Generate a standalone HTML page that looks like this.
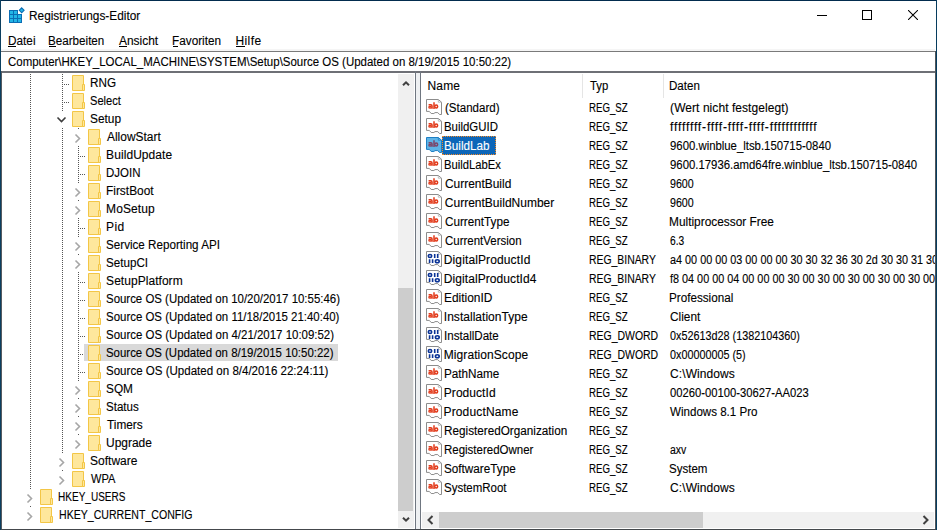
<!DOCTYPE html>
<html><head><meta charset="utf-8"><style>
html,body{margin:0;padding:0;width:937px;height:530px;overflow:hidden;background:#fff}
body{position:relative;font-family:"Liberation Sans", sans-serif;font-size:12px}
.t{position:absolute;white-space:pre;line-height:14px;font-size:12px;transform-origin:0 0;display:inline-block;-webkit-text-stroke:0.12px currentColor;}
.r{position:absolute}
</style></head><body>
<svg style="position:absolute;left:9px;top:7px" width="16" height="16" viewBox="0 0 16 16">
<path d="M0 3 H9 V7 H13 V16 H0 Z" fill="#0b6db4"/>
<g fill="#22b5e6">
<rect x="1" y="4" width="3" height="3"/><rect x="5" y="4" width="3" height="3"/>
<rect x="1" y="8" width="3" height="3"/><rect x="5" y="8" width="3" height="3"/><rect x="9" y="8" width="3" height="3"/>
<rect x="1" y="12" width="3" height="3"/><rect x="5" y="12" width="3" height="3"/><rect x="9" y="12" width="3" height="3"/>
</g>
<path d="M12.7 0.9 L15.1 3.3 L12.7 5.7 L10.3 3.3 Z" fill="#22b5e6" stroke="#0b6db4" stroke-width="1.1"/>
</svg><span class="t" style="left:29.41px;top:8.84px;color:#000;transform:scaleX(0.9866);">Registrierungs-Editor</span><div class="r" style="left:817px;top:15px;width:10px;height:1px;background:#000;"></div><div class="r" style="left:862px;top:10px;width:10px;height:10px;background:transparent;box-sizing:border-box;border:1px solid #000"></div><svg style="position:absolute;left:908px;top:10px" width="10" height="10" viewBox="0 0 10 10"><path d="M0 0 L10 10 M10 0 L0 10" stroke="#000" stroke-width="1.05"/></svg><span class="t" style="left:8.02px;top:33.54px;color:#000;transform:scaleX(0.9815);">Datei</span><span class="t" style="left:48.33px;top:33.54px;color:#000;transform:scaleX(0.9702);">Bearbeiten</span><span class="t" style="left:119.40px;top:33.54px;color:#000;transform:scaleX(0.9950);">Ansicht</span><span class="t" style="left:172.22px;top:33.54px;color:#000;transform:scaleX(0.9816);">Favoriten</span><span class="t" style="left:235.40px;top:33.54px;color:#000;letter-spacing:0.425px;">Hilfe</span><div class="r" style="left:8px;top:46px;width:8px;height:1px;background:#000;"></div><div class="r" style="left:49px;top:46px;width:7px;height:1px;background:#000;"></div><div class="r" style="left:119px;top:46px;width:8px;height:1px;background:#000;"></div><div class="r" style="left:173px;top:46px;width:5px;height:1px;background:#000;"></div><div class="r" style="left:236px;top:46px;width:9px;height:1px;background:#000;"></div><div class="r" style="left:1px;top:49px;width:934px;height:2px;background:#f5f5f5;"></div><div class="r" style="left:1px;top:51px;width:934px;height:1px;background:#7a7a7a;"></div><div class="r" style="left:1px;top:71px;width:934px;height:2px;background:#6e7076;"></div><span class="t" style="left:7.60px;top:54.54px;color:#000;transform:scaleX(0.9561);">Computer\HKEY_LOCAL_MACHINE\SYSTEM\Setup\Source OS (Updated on 8/19/2015 10:50:22)</span><div class="r" style="left:30px;top:74px;width:1px;height:441px;background:transparent;background:repeating-linear-gradient(#555555 0 1px, transparent 1px 2px)"></div><div class="r" style="left:62px;top:74px;width:1px;height:405px;background:transparent;background:repeating-linear-gradient(#555555 0 1px, transparent 1px 2px)"></div><div class="r" style="left:78px;top:128px;width:1px;height:315px;background:transparent;background:repeating-linear-gradient(#555555 0 1px, transparent 1px 2px)"></div><div class="r" style="left:64px;top:84px;width:6px;height:1px;background:transparent;background:repeating-linear-gradient(90deg,#555555 0 1px, transparent 1px 2px)"></div><div class="r" style="left:64px;top:102px;width:6px;height:1px;background:transparent;background:repeating-linear-gradient(90deg,#555555 0 1px, transparent 1px 2px)"></div><div class="r" style="left:80px;top:156px;width:6px;height:1px;background:transparent;background:repeating-linear-gradient(90deg,#555555 0 1px, transparent 1px 2px)"></div><div class="r" style="left:80px;top:174px;width:6px;height:1px;background:transparent;background:repeating-linear-gradient(90deg,#555555 0 1px, transparent 1px 2px)"></div><div class="r" style="left:80px;top:228px;width:6px;height:1px;background:transparent;background:repeating-linear-gradient(90deg,#555555 0 1px, transparent 1px 2px)"></div><div class="r" style="left:80px;top:282px;width:6px;height:1px;background:transparent;background:repeating-linear-gradient(90deg,#555555 0 1px, transparent 1px 2px)"></div><div class="r" style="left:80px;top:300px;width:6px;height:1px;background:transparent;background:repeating-linear-gradient(90deg,#555555 0 1px, transparent 1px 2px)"></div><div class="r" style="left:80px;top:318px;width:6px;height:1px;background:transparent;background:repeating-linear-gradient(90deg,#555555 0 1px, transparent 1px 2px)"></div><div class="r" style="left:80px;top:336px;width:6px;height:1px;background:transparent;background:repeating-linear-gradient(90deg,#555555 0 1px, transparent 1px 2px)"></div><div class="r" style="left:80px;top:354px;width:6px;height:1px;background:transparent;background:repeating-linear-gradient(90deg,#555555 0 1px, transparent 1px 2px)"></div><div class="r" style="left:80px;top:372px;width:6px;height:1px;background:transparent;background:repeating-linear-gradient(90deg,#555555 0 1px, transparent 1px 2px)"></div><svg style="position:absolute;left:72px;top:75px" width="14" height="16" viewBox="0 0 14 16">
<path d="M0.5 0.5 H11.5 V15.5 H0.5 Z" fill="#fee79c" stroke="#f3c646" stroke-width="1"/>
<path d="M10.5 9.5 H12.5 V15.5 H10.5 Z" fill="#fee79c" stroke="#f3c646" stroke-width="1"/>
</svg><span class="t" style="left:90.22px;top:75.64px;color:#000;transform:scaleX(0.9760);">RNG</span><svg style="position:absolute;left:72px;top:93px" width="14" height="16" viewBox="0 0 14 16">
<path d="M0.5 0.5 H11.5 V15.5 H0.5 Z" fill="#fee79c" stroke="#f3c646" stroke-width="1"/>
<path d="M10.5 9.5 H12.5 V15.5 H10.5 Z" fill="#fee79c" stroke="#f3c646" stroke-width="1"/>
</svg><span class="t" style="left:90.27px;top:93.64px;color:#000;transform:scaleX(0.9273);">Select</span><svg style="position:absolute;left:72px;top:111px" width="14" height="16" viewBox="0 0 14 16">
<path d="M0.5 0.5 H11.5 V15.5 H0.5 Z" fill="#fee79c" stroke="#f3c646" stroke-width="1"/>
<path d="M10.5 9.5 H12.5 V15.5 H10.5 Z" fill="#fee79c" stroke="#f3c646" stroke-width="1"/>
</svg><div class="r" style="left:55px;top:111px;width:12px;height:17px;background:#fff;"></div><svg style="position:absolute;left:56px;top:116px" width="11" height="8" viewBox="0 0 11 8"><path d="M1.5 1.5 L5.5 5.5 L9.5 1.5" fill="none" stroke="#3c3c3c" stroke-width="1.6"/></svg><span class="t" style="left:90.21px;top:111.64px;color:#000;transform:scaleX(0.9900);">Setup</span><svg style="position:absolute;left:88px;top:129px" width="14" height="16" viewBox="0 0 14 16">
<path d="M0.5 0.5 H11.5 V15.5 H0.5 Z" fill="#fee79c" stroke="#f3c646" stroke-width="1"/>
<path d="M10.5 9.5 H12.5 V15.5 H10.5 Z" fill="#fee79c" stroke="#f3c646" stroke-width="1"/>
</svg><div class="r" style="left:73px;top:129px;width:9px;height:17px;background:#fff;"></div><svg style="position:absolute;left:74px;top:132.5px" width="8" height="11" viewBox="0 0 8 11"><path d="M1.5 1.5 L5.5 5.5 L1.5 9.5" fill="none" stroke="#a6a6a6" stroke-width="1.6"/></svg><span class="t" style="left:107.10px;top:129.64px;color:#000;transform:scaleX(0.9944);">AllowStart</span><svg style="position:absolute;left:88px;top:147px" width="14" height="16" viewBox="0 0 14 16">
<path d="M0.5 0.5 H11.5 V15.5 H0.5 Z" fill="#fee79c" stroke="#f3c646" stroke-width="1"/>
<path d="M10.5 9.5 H12.5 V15.5 H10.5 Z" fill="#fee79c" stroke="#f3c646" stroke-width="1"/>
</svg><span class="t" style="left:106.10px;top:147.64px;color:#000;letter-spacing:0.070px;">BuildUpdate</span><svg style="position:absolute;left:88px;top:165px" width="14" height="16" viewBox="0 0 14 16">
<path d="M0.5 0.5 H11.5 V15.5 H0.5 Z" fill="#fee79c" stroke="#f3c646" stroke-width="1"/>
<path d="M10.5 9.5 H12.5 V15.5 H10.5 Z" fill="#fee79c" stroke="#f3c646" stroke-width="1"/>
</svg><span class="t" style="left:106.14px;top:165.64px;color:#000;transform:scaleX(0.9559);">DJOIN</span><svg style="position:absolute;left:88px;top:183px" width="14" height="16" viewBox="0 0 14 16">
<path d="M0.5 0.5 H11.5 V15.5 H0.5 Z" fill="#fee79c" stroke="#f3c646" stroke-width="1"/>
<path d="M10.5 9.5 H12.5 V15.5 H10.5 Z" fill="#fee79c" stroke="#f3c646" stroke-width="1"/>
</svg><div class="r" style="left:73px;top:183px;width:9px;height:17px;background:#fff;"></div><svg style="position:absolute;left:74px;top:186.5px" width="8" height="11" viewBox="0 0 8 11"><path d="M1.5 1.5 L5.5 5.5 L1.5 9.5" fill="none" stroke="#a6a6a6" stroke-width="1.6"/></svg><span class="t" style="left:106.11px;top:183.64px;color:#000;transform:scaleX(0.9915);">FirstBoot</span><svg style="position:absolute;left:88px;top:201px" width="14" height="16" viewBox="0 0 14 16">
<path d="M0.5 0.5 H11.5 V15.5 H0.5 Z" fill="#fee79c" stroke="#f3c646" stroke-width="1"/>
<path d="M10.5 9.5 H12.5 V15.5 H10.5 Z" fill="#fee79c" stroke="#f3c646" stroke-width="1"/>
</svg><div class="r" style="left:73px;top:201px;width:9px;height:17px;background:#fff;"></div><svg style="position:absolute;left:74px;top:204.5px" width="8" height="11" viewBox="0 0 8 11"><path d="M1.5 1.5 L5.5 5.5 L1.5 9.5" fill="none" stroke="#a6a6a6" stroke-width="1.6"/></svg><span class="t" style="left:106.10px;top:201.64px;color:#000;letter-spacing:0.083px;">MoSetup</span><svg style="position:absolute;left:88px;top:219px" width="14" height="16" viewBox="0 0 14 16">
<path d="M0.5 0.5 H11.5 V15.5 H0.5 Z" fill="#fee79c" stroke="#f3c646" stroke-width="1"/>
<path d="M10.5 9.5 H12.5 V15.5 H10.5 Z" fill="#fee79c" stroke="#f3c646" stroke-width="1"/>
</svg><span class="t" style="left:106.10px;top:219.64px;color:#000;letter-spacing:0.350px;">Pid</span><svg style="position:absolute;left:88px;top:237px" width="14" height="16" viewBox="0 0 14 16">
<path d="M0.5 0.5 H11.5 V15.5 H0.5 Z" fill="#fee79c" stroke="#f3c646" stroke-width="1"/>
<path d="M10.5 9.5 H12.5 V15.5 H10.5 Z" fill="#fee79c" stroke="#f3c646" stroke-width="1"/>
</svg><div class="r" style="left:73px;top:237px;width:9px;height:17px;background:#fff;"></div><svg style="position:absolute;left:74px;top:240.5px" width="8" height="11" viewBox="0 0 8 11"><path d="M1.5 1.5 L5.5 5.5 L1.5 9.5" fill="none" stroke="#a6a6a6" stroke-width="1.6"/></svg><span class="t" style="left:106.13px;top:237.64px;color:#000;transform:scaleX(0.9707);">Service Reporting API</span><svg style="position:absolute;left:88px;top:255px" width="14" height="16" viewBox="0 0 14 16">
<path d="M0.5 0.5 H11.5 V15.5 H0.5 Z" fill="#fee79c" stroke="#f3c646" stroke-width="1"/>
<path d="M10.5 9.5 H12.5 V15.5 H10.5 Z" fill="#fee79c" stroke="#f3c646" stroke-width="1"/>
</svg><div class="r" style="left:73px;top:255px;width:9px;height:17px;background:#fff;"></div><svg style="position:absolute;left:74px;top:258.5px" width="8" height="11" viewBox="0 0 8 11"><path d="M1.5 1.5 L5.5 5.5 L1.5 9.5" fill="none" stroke="#a6a6a6" stroke-width="1.6"/></svg><span class="t" style="left:106.13px;top:255.64px;color:#000;transform:scaleX(0.9690);">SetupCI</span><svg style="position:absolute;left:88px;top:273px" width="14" height="16" viewBox="0 0 14 16">
<path d="M0.5 0.5 H11.5 V15.5 H0.5 Z" fill="#fee79c" stroke="#f3c646" stroke-width="1"/>
<path d="M10.5 9.5 H12.5 V15.5 H10.5 Z" fill="#fee79c" stroke="#f3c646" stroke-width="1"/>
</svg><span class="t" style="left:106.10px;top:273.64px;color:#000;letter-spacing:0.042px;">SetupPlatform</span><svg style="position:absolute;left:88px;top:291px" width="14" height="16" viewBox="0 0 14 16">
<path d="M0.5 0.5 H11.5 V15.5 H0.5 Z" fill="#fee79c" stroke="#f3c646" stroke-width="1"/>
<path d="M10.5 9.5 H12.5 V15.5 H10.5 Z" fill="#fee79c" stroke="#f3c646" stroke-width="1"/>
</svg><span class="t" style="left:106.15px;top:291.64px;color:#000;transform:scaleX(0.9529);">Source OS (Updated on 10/20/2017 10:55:46)</span><svg style="position:absolute;left:88px;top:309px" width="14" height="16" viewBox="0 0 14 16">
<path d="M0.5 0.5 H11.5 V15.5 H0.5 Z" fill="#fee79c" stroke="#f3c646" stroke-width="1"/>
<path d="M10.5 9.5 H12.5 V15.5 H10.5 Z" fill="#fee79c" stroke="#f3c646" stroke-width="1"/>
</svg><span class="t" style="left:106.15px;top:309.64px;color:#000;transform:scaleX(0.9543);">Source OS (Updated on 11/18/2015 21:40:40)</span><svg style="position:absolute;left:88px;top:327px" width="14" height="16" viewBox="0 0 14 16">
<path d="M0.5 0.5 H11.5 V15.5 H0.5 Z" fill="#fee79c" stroke="#f3c646" stroke-width="1"/>
<path d="M10.5 9.5 H12.5 V15.5 H10.5 Z" fill="#fee79c" stroke="#f3c646" stroke-width="1"/>
</svg><span class="t" style="left:106.15px;top:327.64px;color:#000;transform:scaleX(0.9549);">Source OS (Updated on 4/21/2017 10:09:52)</span><div class="r" style="left:84px;top:344px;width:254px;height:17px;background:#d9d9d9;"></div><svg style="position:absolute;left:88px;top:345px" width="14" height="16" viewBox="0 0 14 16">
<path d="M0.5 0.5 H11.5 V15.5 H0.5 Z" fill="#fee79c" stroke="#f3c646" stroke-width="1"/>
<path d="M10.5 9.5 H12.5 V15.5 H10.5 Z" fill="#fee79c" stroke="#f3c646" stroke-width="1"/>
</svg><span class="t" style="left:106.15px;top:345.64px;color:#000;transform:scaleX(0.9523);">Source OS (Updated on 8/19/2015 10:50:22)</span><svg style="position:absolute;left:88px;top:363px" width="14" height="16" viewBox="0 0 14 16">
<path d="M0.5 0.5 H11.5 V15.5 H0.5 Z" fill="#fee79c" stroke="#f3c646" stroke-width="1"/>
<path d="M10.5 9.5 H12.5 V15.5 H10.5 Z" fill="#fee79c" stroke="#f3c646" stroke-width="1"/>
</svg><span class="t" style="left:105.94px;top:363.64px;color:#000;transform:scaleX(0.9617);">Source OS (Updated on 8/4/2016 22:24:11)</span><svg style="position:absolute;left:88px;top:381px" width="14" height="16" viewBox="0 0 14 16">
<path d="M0.5 0.5 H11.5 V15.5 H0.5 Z" fill="#fee79c" stroke="#f3c646" stroke-width="1"/>
<path d="M10.5 9.5 H12.5 V15.5 H10.5 Z" fill="#fee79c" stroke="#f3c646" stroke-width="1"/>
</svg><div class="r" style="left:73px;top:381px;width:9px;height:17px;background:#fff;"></div><svg style="position:absolute;left:74px;top:384.5px" width="8" height="11" viewBox="0 0 8 11"><path d="M1.5 1.5 L5.5 5.5 L1.5 9.5" fill="none" stroke="#a6a6a6" stroke-width="1.6"/></svg><span class="t" style="left:106.22px;top:381.64px;color:#000;transform:scaleX(0.9846);">SQM</span><svg style="position:absolute;left:88px;top:399px" width="14" height="16" viewBox="0 0 14 16">
<path d="M0.5 0.5 H11.5 V15.5 H0.5 Z" fill="#fee79c" stroke="#f3c646" stroke-width="1"/>
<path d="M10.5 9.5 H12.5 V15.5 H10.5 Z" fill="#fee79c" stroke="#f3c646" stroke-width="1"/>
</svg><div class="r" style="left:73px;top:399px;width:9px;height:17px;background:#fff;"></div><svg style="position:absolute;left:74px;top:402.5px" width="8" height="11" viewBox="0 0 8 11"><path d="M1.5 1.5 L5.5 5.5 L1.5 9.5" fill="none" stroke="#a6a6a6" stroke-width="1.6"/></svg><span class="t" style="left:106.24px;top:399.64px;color:#000;transform:scaleX(0.9636);">Status</span><svg style="position:absolute;left:88px;top:417px" width="14" height="16" viewBox="0 0 14 16">
<path d="M0.5 0.5 H11.5 V15.5 H0.5 Z" fill="#fee79c" stroke="#f3c646" stroke-width="1"/>
<path d="M10.5 9.5 H12.5 V15.5 H10.5 Z" fill="#fee79c" stroke="#f3c646" stroke-width="1"/>
</svg><div class="r" style="left:73px;top:417px;width:9px;height:17px;background:#fff;"></div><svg style="position:absolute;left:74px;top:420.5px" width="8" height="11" viewBox="0 0 8 11"><path d="M1.5 1.5 L5.5 5.5 L1.5 9.5" fill="none" stroke="#a6a6a6" stroke-width="1.6"/></svg><span class="t" style="left:107.20px;top:417.64px;color:#000;transform:scaleX(0.9861);">Timers</span><svg style="position:absolute;left:88px;top:435px" width="14" height="16" viewBox="0 0 14 16">
<path d="M0.5 0.5 H11.5 V15.5 H0.5 Z" fill="#fee79c" stroke="#f3c646" stroke-width="1"/>
<path d="M10.5 9.5 H12.5 V15.5 H10.5 Z" fill="#fee79c" stroke="#f3c646" stroke-width="1"/>
</svg><div class="r" style="left:73px;top:435px;width:9px;height:17px;background:#fff;"></div><svg style="position:absolute;left:74px;top:438.5px" width="8" height="11" viewBox="0 0 8 11"><path d="M1.5 1.5 L5.5 5.5 L1.5 9.5" fill="none" stroke="#a6a6a6" stroke-width="1.6"/></svg><span class="t" style="left:106.20px;top:435.64px;color:#000;transform:scaleX(0.9978);">Upgrade</span><svg style="position:absolute;left:72px;top:453px" width="14" height="16" viewBox="0 0 14 16">
<path d="M0.5 0.5 H11.5 V15.5 H0.5 Z" fill="#fee79c" stroke="#f3c646" stroke-width="1"/>
<path d="M10.5 9.5 H12.5 V15.5 H10.5 Z" fill="#fee79c" stroke="#f3c646" stroke-width="1"/>
</svg><div class="r" style="left:57px;top:453px;width:9px;height:17px;background:#fff;"></div><svg style="position:absolute;left:58px;top:456.5px" width="8" height="11" viewBox="0 0 8 11"><path d="M1.5 1.5 L5.5 5.5 L1.5 9.5" fill="none" stroke="#a6a6a6" stroke-width="1.6"/></svg><span class="t" style="left:90.00px;top:453.64px;color:#000;letter-spacing:0.014px;">Software</span><svg style="position:absolute;left:72px;top:471px" width="14" height="16" viewBox="0 0 14 16">
<path d="M0.5 0.5 H11.5 V15.5 H0.5 Z" fill="#fee79c" stroke="#f3c646" stroke-width="1"/>
<path d="M10.5 9.5 H12.5 V15.5 H10.5 Z" fill="#fee79c" stroke="#f3c646" stroke-width="1"/>
</svg><div class="r" style="left:57px;top:471px;width:9px;height:17px;background:#fff;"></div><svg style="position:absolute;left:58px;top:474.5px" width="8" height="11" viewBox="0 0 8 11"><path d="M1.5 1.5 L5.5 5.5 L1.5 9.5" fill="none" stroke="#a6a6a6" stroke-width="1.6"/></svg><span class="t" style="left:91.00px;top:471.64px;color:#000;transform:scaleX(0.9222);">WPA</span><svg style="position:absolute;left:40px;top:489px" width="14" height="16" viewBox="0 0 14 16">
<path d="M0.5 0.5 H11.5 V15.5 H0.5 Z" fill="#fee79c" stroke="#f3c646" stroke-width="1"/>
<path d="M10.5 9.5 H12.5 V15.5 H10.5 Z" fill="#fee79c" stroke="#f3c646" stroke-width="1"/>
</svg><div class="r" style="left:25px;top:489px;width:9px;height:17px;background:#fff;"></div><svg style="position:absolute;left:26px;top:492.5px" width="8" height="11" viewBox="0 0 8 11"><path d="M1.5 1.5 L5.5 5.5 L1.5 9.5" fill="none" stroke="#a6a6a6" stroke-width="1.6"/></svg><span class="t" style="left:58.16px;top:489.64px;color:#000;transform:scaleX(0.8362);">HKEY_USERS</span><svg style="position:absolute;left:40px;top:507px" width="14" height="16" viewBox="0 0 14 16">
<path d="M0.5 0.5 H11.5 V15.5 H0.5 Z" fill="#fee79c" stroke="#f3c646" stroke-width="1"/>
<path d="M10.5 9.5 H12.5 V15.5 H10.5 Z" fill="#fee79c" stroke="#f3c646" stroke-width="1"/>
</svg><div class="r" style="left:25px;top:507px;width:9px;height:17px;background:#fff;"></div><svg style="position:absolute;left:26px;top:510.5px" width="8" height="11" viewBox="0 0 8 11"><path d="M1.5 1.5 L5.5 5.5 L1.5 9.5" fill="none" stroke="#a6a6a6" stroke-width="1.6"/></svg><span class="t" style="left:59.02px;top:507.64px;color:#000;transform:scaleX(0.8813);">HKEY_CURRENT_CONFIG</span><div class="r" style="left:398px;top:74px;width:16px;height:454px;background:#f0f0f0;"></div><div class="r" style="left:398px;top:288px;width:15px;height:223px;background:#cdcdcd;"></div><svg style="position:absolute;left:400.5px;top:79px" width="10" height="8" viewBox="0 0 10 8"><path d="M2 6.3 L5 3.3 L8 6.3" fill="none" stroke="#404040" stroke-width="2"/></svg><svg style="position:absolute;left:400.5px;top:516px" width="10" height="8" viewBox="0 0 10 8"><path d="M2 1.7 L5 4.7 L8 1.7" fill="none" stroke="#404040" stroke-width="2"/></svg><div class="r" style="left:415px;top:71px;width:1px;height:458px;background:#6f7680;"></div><div class="r" style="left:416px;top:73px;width:4px;height:456px;background:#eef0f2;"></div><div class="r" style="left:420px;top:71px;width:1px;height:458px;background:#6f7680;"></div><div style="position:absolute;left:421px;top:73px;width:514px;height:439px;overflow:hidden"><div class="r" style="left:161px;top:1px;width:1px;height:24px;background:#e5e5e5;"></div><div class="r" style="left:242px;top:1px;width:1px;height:24px;background:#e5e5e5;"></div><span class="t" style="left:6.50px;top:5.74px;color:#000;letter-spacing:0.167px;">Name</span><span class="t" style="left:168.70px;top:5.74px;color:#000;transform:scaleX(0.9421);">Typ</span><span class="t" style="left:248.44px;top:5.74px;color:#000;transform:scaleX(0.9645);">Daten</span><svg style="position:absolute;left:5px;top:26px" width="17" height="17" viewBox="0 0 17 17">
<path d="M0.5 0.5 H12.3 L15.5 3.2 V15.5 H13.5 L11.8 13.6 H9 L7.9 14.5 H5.2 L3.3 12.4 H0.5 Z" fill="#fff" stroke="#8c8c8c" stroke-width="1"/>
<path d="M12.3 0.5 V3.2 H15.5" fill="none" stroke="#b0b0b0" stroke-width="0.8"/>
<g fill="none" stroke="#e23a1a" stroke-width="1.5">
<path d="M8.0 3.2 V9.9"/>
<ellipse cx="10.2" cy="7.5" rx="1.45" ry="1.55"/>
<path d="M2.6 5.75 H4.9 Q6.05 5.75 6.05 6.9 V9.8"/>
<ellipse cx="4.05" cy="8.2" rx="1.15" ry="0.95" stroke-width="1.35"/>
</g>
</svg><span class="t" style="left:23.50px;top:28.44px;color:#000;transform:scaleX(0.9625);">(Standard)</span><span class="t" style="left:167.79px;top:28.44px;color:#000;transform:scaleX(0.8064);">REG_SZ</span><span class="t" style="left:249.10px;top:28.44px;color:#000;letter-spacing:0.059px;">(Wert nicht festgelegt)</span><svg style="position:absolute;left:5px;top:45px" width="17" height="17" viewBox="0 0 17 17">
<path d="M0.5 0.5 H12.3 L15.5 3.2 V15.5 H13.5 L11.8 13.6 H9 L7.9 14.5 H5.2 L3.3 12.4 H0.5 Z" fill="#fff" stroke="#8c8c8c" stroke-width="1"/>
<path d="M12.3 0.5 V3.2 H15.5" fill="none" stroke="#b0b0b0" stroke-width="0.8"/>
<g fill="none" stroke="#e23a1a" stroke-width="1.5">
<path d="M8.0 3.2 V9.9"/>
<ellipse cx="10.2" cy="7.5" rx="1.45" ry="1.55"/>
<path d="M2.6 5.75 H4.9 Q6.05 5.75 6.05 6.9 V9.8"/>
<ellipse cx="4.05" cy="8.2" rx="1.15" ry="0.95" stroke-width="1.35"/>
</g>
</svg><span class="t" style="left:22.85px;top:47.44px;color:#000;transform:scaleX(0.9509);">BuildGUID</span><span class="t" style="left:167.79px;top:47.44px;color:#000;transform:scaleX(0.8064);">REG_SZ</span><span class="t" style="left:249.10px;top:47.44px;color:#000;letter-spacing:0.849px;">ffffffff-ffff-ffff-ffff-ffffffffffff</span><svg style="position:absolute;left:5px;top:64px" width="17" height="17" viewBox="0 0 17 17">
<path d="M0.5 0.5 H12.3 L15.5 3.2 V15.5 H13.5 L11.8 13.6 H9 L7.9 14.5 H5.2 L3.3 12.4 H0.5 Z" fill="#5eb3e6" stroke="#1d7fc4" stroke-width="1"/>
<path d="M12.3 0.5 V3.2 H15.5" fill="none" stroke="#1d7fc4" stroke-width="0.8"/>
<g fill="none" stroke="#7c4468" stroke-width="1.5">
<path d="M8.0 3.2 V9.9"/>
<ellipse cx="10.2" cy="7.5" rx="1.45" ry="1.55"/>
<path d="M2.6 5.75 H4.9 Q6.05 5.75 6.05 6.9 V9.8"/>
<ellipse cx="4.05" cy="8.2" rx="1.15" ry="0.95" stroke-width="1.35"/>
</g>
</svg><div class="r" style="left:21px;top:63px;width:54px;height:19px;background:#0c66b8;box-sizing:border-box;border:1px dotted #f58a26"></div><span class="t" style="left:22.83px;top:66.44px;color:#fff;transform:scaleX(0.9739);">BuildLab</span><span class="t" style="left:167.79px;top:66.44px;color:#000;transform:scaleX(0.8064);">REG_SZ</span><span class="t" style="left:249.10px;top:66.44px;color:#000;transform:scaleX(0.9465);">9600.winblue_ltsb.150715-0840</span><svg style="position:absolute;left:5px;top:83px" width="17" height="17" viewBox="0 0 17 17">
<path d="M0.5 0.5 H12.3 L15.5 3.2 V15.5 H13.5 L11.8 13.6 H9 L7.9 14.5 H5.2 L3.3 12.4 H0.5 Z" fill="#fff" stroke="#8c8c8c" stroke-width="1"/>
<path d="M12.3 0.5 V3.2 H15.5" fill="none" stroke="#b0b0b0" stroke-width="0.8"/>
<g fill="none" stroke="#e23a1a" stroke-width="1.5">
<path d="M8.0 3.2 V9.9"/>
<ellipse cx="10.2" cy="7.5" rx="1.45" ry="1.55"/>
<path d="M2.6 5.75 H4.9 Q6.05 5.75 6.05 6.9 V9.8"/>
<ellipse cx="4.05" cy="8.2" rx="1.15" ry="0.95" stroke-width="1.35"/>
</g>
</svg><span class="t" style="left:22.86px;top:85.44px;color:#000;transform:scaleX(0.9383);">BuildLabEx</span><span class="t" style="left:167.79px;top:85.44px;color:#000;transform:scaleX(0.8064);">REG_SZ</span><span class="t" style="left:249.10px;top:85.44px;color:#000;transform:scaleX(0.9471);">9600.17936.amd64fre.winblue_ltsb.150715-0840</span><svg style="position:absolute;left:5px;top:102px" width="17" height="17" viewBox="0 0 17 17">
<path d="M0.5 0.5 H12.3 L15.5 3.2 V15.5 H13.5 L11.8 13.6 H9 L7.9 14.5 H5.2 L3.3 12.4 H0.5 Z" fill="#fff" stroke="#8c8c8c" stroke-width="1"/>
<path d="M12.3 0.5 V3.2 H15.5" fill="none" stroke="#b0b0b0" stroke-width="0.8"/>
<g fill="none" stroke="#e23a1a" stroke-width="1.5">
<path d="M8.0 3.2 V9.9"/>
<ellipse cx="10.2" cy="7.5" rx="1.45" ry="1.55"/>
<path d="M2.6 5.75 H4.9 Q6.05 5.75 6.05 6.9 V9.8"/>
<ellipse cx="4.05" cy="8.2" rx="1.15" ry="0.95" stroke-width="1.35"/>
</g>
</svg><span class="t" style="left:23.80px;top:104.44px;color:#000;transform:scaleX(0.9939);">CurrentBuild</span><span class="t" style="left:167.79px;top:104.44px;color:#000;transform:scaleX(0.8064);">REG_SZ</span><span class="t" style="left:249.10px;top:104.44px;color:#000;transform:scaleX(0.8889);">9600</span><svg style="position:absolute;left:5px;top:121px" width="17" height="17" viewBox="0 0 17 17">
<path d="M0.5 0.5 H12.3 L15.5 3.2 V15.5 H13.5 L11.8 13.6 H9 L7.9 14.5 H5.2 L3.3 12.4 H0.5 Z" fill="#fff" stroke="#8c8c8c" stroke-width="1"/>
<path d="M12.3 0.5 V3.2 H15.5" fill="none" stroke="#b0b0b0" stroke-width="0.8"/>
<g fill="none" stroke="#e23a1a" stroke-width="1.5">
<path d="M8.0 3.2 V9.9"/>
<ellipse cx="10.2" cy="7.5" rx="1.45" ry="1.55"/>
<path d="M2.6 5.75 H4.9 Q6.05 5.75 6.05 6.9 V9.8"/>
<ellipse cx="4.05" cy="8.2" rx="1.15" ry="0.95" stroke-width="1.35"/>
</g>
</svg><span class="t" style="left:23.80px;top:123.44px;color:#000;letter-spacing:0.006px;">CurrentBuildNumber</span><span class="t" style="left:167.79px;top:123.44px;color:#000;transform:scaleX(0.8064);">REG_SZ</span><span class="t" style="left:249.10px;top:123.44px;color:#000;transform:scaleX(0.8889);">9600</span><svg style="position:absolute;left:5px;top:140px" width="17" height="17" viewBox="0 0 17 17">
<path d="M0.5 0.5 H12.3 L15.5 3.2 V15.5 H13.5 L11.8 13.6 H9 L7.9 14.5 H5.2 L3.3 12.4 H0.5 Z" fill="#fff" stroke="#8c8c8c" stroke-width="1"/>
<path d="M12.3 0.5 V3.2 H15.5" fill="none" stroke="#b0b0b0" stroke-width="0.8"/>
<g fill="none" stroke="#e23a1a" stroke-width="1.5">
<path d="M8.0 3.2 V9.9"/>
<ellipse cx="10.2" cy="7.5" rx="1.45" ry="1.55"/>
<path d="M2.6 5.75 H4.9 Q6.05 5.75 6.05 6.9 V9.8"/>
<ellipse cx="4.05" cy="8.2" rx="1.15" ry="0.95" stroke-width="1.35"/>
</g>
</svg><span class="t" style="left:23.80px;top:142.44px;color:#000;transform:scaleX(0.9758);">CurrentType</span><span class="t" style="left:167.79px;top:142.44px;color:#000;transform:scaleX(0.8064);">REG_SZ</span><span class="t" style="left:248.11px;top:142.44px;color:#000;transform:scaleX(0.9895);">Multiprocessor Free</span><svg style="position:absolute;left:5px;top:159px" width="17" height="17" viewBox="0 0 17 17">
<path d="M0.5 0.5 H12.3 L15.5 3.2 V15.5 H13.5 L11.8 13.6 H9 L7.9 14.5 H5.2 L3.3 12.4 H0.5 Z" fill="#fff" stroke="#8c8c8c" stroke-width="1"/>
<path d="M12.3 0.5 V3.2 H15.5" fill="none" stroke="#b0b0b0" stroke-width="0.8"/>
<g fill="none" stroke="#e23a1a" stroke-width="1.5">
<path d="M8.0 3.2 V9.9"/>
<ellipse cx="10.2" cy="7.5" rx="1.45" ry="1.55"/>
<path d="M2.6 5.75 H4.9 Q6.05 5.75 6.05 6.9 V9.8"/>
<ellipse cx="4.05" cy="8.2" rx="1.15" ry="0.95" stroke-width="1.35"/>
</g>
</svg><span class="t" style="left:23.80px;top:161.44px;color:#000;transform:scaleX(0.9562);">CurrentVersion</span><span class="t" style="left:167.79px;top:161.44px;color:#000;transform:scaleX(0.8064);">REG_SZ</span><span class="t" style="left:249.10px;top:161.44px;color:#000;transform:scaleX(0.8529);">6.3</span><svg style="position:absolute;left:5px;top:178px" width="17" height="17" viewBox="0 0 17 17">
<path d="M0.5 0.5 H12.3 L15.5 3.2 V15.5 H13.5 L11.8 13.6 H9 L7.9 14.5 H5.2 L3.3 12.4 H0.5 Z" fill="#fff" stroke="#8c8c8c" stroke-width="1"/>
<path d="M12.3 0.5 V3.2 H15.5" fill="none" stroke="#b0b0b0" stroke-width="0.8"/>
<g fill="none" stroke="#0a3396" stroke-width="1.6">
<ellipse cx="4" cy="5" rx="1.7" ry="1.5"/><path d="M8.7 3 V7 M11.7 3 V7 M3.6 8.3 V12.1 M6.6 8.3 V12.1"/>
<ellipse cx="11.3" cy="10.2" rx="1.9" ry="1.5"/></g>
</svg><span class="t" style="left:22.80px;top:180.44px;color:#000;letter-spacing:0.120px;">DigitalProductId</span><span class="t" style="left:167.73px;top:180.44px;color:#000;transform:scaleX(0.8671);">REG_BINARY</span><span class="t" style="left:249.10px;top:180.44px;color:#000;transform:scaleX(0.9030);">a4 00 00 00 03 00 00 00 30 30 32 36 30 2d 30 30 31 30 30 2d</span><svg style="position:absolute;left:5px;top:197px" width="17" height="17" viewBox="0 0 17 17">
<path d="M0.5 0.5 H12.3 L15.5 3.2 V15.5 H13.5 L11.8 13.6 H9 L7.9 14.5 H5.2 L3.3 12.4 H0.5 Z" fill="#fff" stroke="#8c8c8c" stroke-width="1"/>
<path d="M12.3 0.5 V3.2 H15.5" fill="none" stroke="#b0b0b0" stroke-width="0.8"/>
<g fill="none" stroke="#0a3396" stroke-width="1.6">
<ellipse cx="4" cy="5" rx="1.7" ry="1.5"/><path d="M8.7 3 V7 M11.7 3 V7 M3.6 8.3 V12.1 M6.6 8.3 V12.1"/>
<ellipse cx="11.3" cy="10.2" rx="1.9" ry="1.5"/></g>
</svg><span class="t" style="left:22.80px;top:199.44px;color:#000;letter-spacing:0.075px;">DigitalProductId4</span><span class="t" style="left:167.73px;top:199.44px;color:#000;transform:scaleX(0.8671);">REG_BINARY</span><span class="t" style="left:249.10px;top:199.44px;color:#000;transform:scaleX(0.9030);">f8 04 00 00 04 00 00 00 30 00 30 00 30 00 30 00 30 00 30 00</span><svg style="position:absolute;left:5px;top:216px" width="17" height="17" viewBox="0 0 17 17">
<path d="M0.5 0.5 H12.3 L15.5 3.2 V15.5 H13.5 L11.8 13.6 H9 L7.9 14.5 H5.2 L3.3 12.4 H0.5 Z" fill="#fff" stroke="#8c8c8c" stroke-width="1"/>
<path d="M12.3 0.5 V3.2 H15.5" fill="none" stroke="#b0b0b0" stroke-width="0.8"/>
<g fill="none" stroke="#e23a1a" stroke-width="1.5">
<path d="M8.0 3.2 V9.9"/>
<ellipse cx="10.2" cy="7.5" rx="1.45" ry="1.55"/>
<path d="M2.6 5.75 H4.9 Q6.05 5.75 6.05 6.9 V9.8"/>
<ellipse cx="4.05" cy="8.2" rx="1.15" ry="0.95" stroke-width="1.35"/>
</g>
</svg><span class="t" style="left:22.81px;top:218.44px;color:#000;transform:scaleX(0.9936);">EditionID</span><span class="t" style="left:167.79px;top:218.44px;color:#000;transform:scaleX(0.8064);">REG_SZ</span><span class="t" style="left:248.13px;top:218.44px;color:#000;transform:scaleX(0.9738);">Professional</span><svg style="position:absolute;left:5px;top:235px" width="17" height="17" viewBox="0 0 17 17">
<path d="M0.5 0.5 H12.3 L15.5 3.2 V15.5 H13.5 L11.8 13.6 H9 L7.9 14.5 H5.2 L3.3 12.4 H0.5 Z" fill="#fff" stroke="#8c8c8c" stroke-width="1"/>
<path d="M12.3 0.5 V3.2 H15.5" fill="none" stroke="#b0b0b0" stroke-width="0.8"/>
<g fill="none" stroke="#e23a1a" stroke-width="1.5">
<path d="M8.0 3.2 V9.9"/>
<ellipse cx="10.2" cy="7.5" rx="1.45" ry="1.55"/>
<path d="M2.6 5.75 H4.9 Q6.05 5.75 6.05 6.9 V9.8"/>
<ellipse cx="4.05" cy="8.2" rx="1.15" ry="0.95" stroke-width="1.35"/>
</g>
</svg><span class="t" style="left:22.80px;top:237.44px;color:#000;letter-spacing:0.027px;">InstallationType</span><span class="t" style="left:167.79px;top:237.44px;color:#000;transform:scaleX(0.8064);">REG_SZ</span><span class="t" style="left:249.10px;top:237.44px;color:#000;transform:scaleX(0.9871);">Client</span><svg style="position:absolute;left:5px;top:254px" width="17" height="17" viewBox="0 0 17 17">
<path d="M0.5 0.5 H12.3 L15.5 3.2 V15.5 H13.5 L11.8 13.6 H9 L7.9 14.5 H5.2 L3.3 12.4 H0.5 Z" fill="#fff" stroke="#8c8c8c" stroke-width="1"/>
<path d="M12.3 0.5 V3.2 H15.5" fill="none" stroke="#b0b0b0" stroke-width="0.8"/>
<g fill="none" stroke="#0a3396" stroke-width="1.6">
<ellipse cx="4" cy="5" rx="1.7" ry="1.5"/><path d="M8.7 3 V7 M11.7 3 V7 M3.6 8.3 V12.1 M6.6 8.3 V12.1"/>
<ellipse cx="11.3" cy="10.2" rx="1.9" ry="1.5"/></g>
</svg><span class="t" style="left:22.83px;top:256.44px;color:#000;transform:scaleX(0.9661);">InstallDate</span><span class="t" style="left:167.73px;top:256.44px;color:#000;transform:scaleX(0.8718);">REG_DWORD</span><span class="t" style="left:249.10px;top:256.44px;color:#000;transform:scaleX(0.9014);">0x52613d28 (1382104360)</span><svg style="position:absolute;left:5px;top:273px" width="17" height="17" viewBox="0 0 17 17">
<path d="M0.5 0.5 H12.3 L15.5 3.2 V15.5 H13.5 L11.8 13.6 H9 L7.9 14.5 H5.2 L3.3 12.4 H0.5 Z" fill="#fff" stroke="#8c8c8c" stroke-width="1"/>
<path d="M12.3 0.5 V3.2 H15.5" fill="none" stroke="#b0b0b0" stroke-width="0.8"/>
<g fill="none" stroke="#0a3396" stroke-width="1.6">
<ellipse cx="4" cy="5" rx="1.7" ry="1.5"/><path d="M8.7 3 V7 M11.7 3 V7 M3.6 8.3 V12.1 M6.6 8.3 V12.1"/>
<ellipse cx="11.3" cy="10.2" rx="1.9" ry="1.5"/></g>
</svg><span class="t" style="left:22.80px;top:275.44px;color:#000;letter-spacing:0.069px;">MigrationScope</span><span class="t" style="left:167.73px;top:275.44px;color:#000;transform:scaleX(0.8718);">REG_DWORD</span><span class="t" style="left:249.10px;top:275.44px;color:#000;transform:scaleX(0.9000);">0x00000005 (5)</span><svg style="position:absolute;left:5px;top:292px" width="17" height="17" viewBox="0 0 17 17">
<path d="M0.5 0.5 H12.3 L15.5 3.2 V15.5 H13.5 L11.8 13.6 H9 L7.9 14.5 H5.2 L3.3 12.4 H0.5 Z" fill="#fff" stroke="#8c8c8c" stroke-width="1"/>
<path d="M12.3 0.5 V3.2 H15.5" fill="none" stroke="#b0b0b0" stroke-width="0.8"/>
<g fill="none" stroke="#e23a1a" stroke-width="1.5">
<path d="M8.0 3.2 V9.9"/>
<ellipse cx="10.2" cy="7.5" rx="1.45" ry="1.55"/>
<path d="M2.6 5.75 H4.9 Q6.05 5.75 6.05 6.9 V9.8"/>
<ellipse cx="4.05" cy="8.2" rx="1.15" ry="0.95" stroke-width="1.35"/>
</g>
</svg><span class="t" style="left:22.82px;top:294.44px;color:#000;transform:scaleX(0.9768);">PathName</span><span class="t" style="left:167.79px;top:294.44px;color:#000;transform:scaleX(0.8064);">REG_SZ</span><span class="t" style="left:249.10px;top:294.44px;color:#000;letter-spacing:0.078px;">C:\Windows</span><svg style="position:absolute;left:5px;top:311px" width="17" height="17" viewBox="0 0 17 17">
<path d="M0.5 0.5 H12.3 L15.5 3.2 V15.5 H13.5 L11.8 13.6 H9 L7.9 14.5 H5.2 L3.3 12.4 H0.5 Z" fill="#fff" stroke="#8c8c8c" stroke-width="1"/>
<path d="M12.3 0.5 V3.2 H15.5" fill="none" stroke="#b0b0b0" stroke-width="0.8"/>
<g fill="none" stroke="#e23a1a" stroke-width="1.5">
<path d="M8.0 3.2 V9.9"/>
<ellipse cx="10.2" cy="7.5" rx="1.45" ry="1.55"/>
<path d="M2.6 5.75 H4.9 Q6.05 5.75 6.05 6.9 V9.8"/>
<ellipse cx="4.05" cy="8.2" rx="1.15" ry="0.95" stroke-width="1.35"/>
</g>
</svg><span class="t" style="left:22.80px;top:313.44px;color:#000;letter-spacing:0.050px;">ProductId</span><span class="t" style="left:167.79px;top:313.44px;color:#000;transform:scaleX(0.8064);">REG_SZ</span><span class="t" style="left:249.10px;top:313.44px;color:#000;transform:scaleX(0.9372);">00260-00100-30627-AA023</span><svg style="position:absolute;left:5px;top:330px" width="17" height="17" viewBox="0 0 17 17">
<path d="M0.5 0.5 H12.3 L15.5 3.2 V15.5 H13.5 L11.8 13.6 H9 L7.9 14.5 H5.2 L3.3 12.4 H0.5 Z" fill="#fff" stroke="#8c8c8c" stroke-width="1"/>
<path d="M12.3 0.5 V3.2 H15.5" fill="none" stroke="#b0b0b0" stroke-width="0.8"/>
<g fill="none" stroke="#e23a1a" stroke-width="1.5">
<path d="M8.0 3.2 V9.9"/>
<ellipse cx="10.2" cy="7.5" rx="1.45" ry="1.55"/>
<path d="M2.6 5.75 H4.9 Q6.05 5.75 6.05 6.9 V9.8"/>
<ellipse cx="4.05" cy="8.2" rx="1.15" ry="0.95" stroke-width="1.35"/>
</g>
</svg><span class="t" style="left:22.50px;top:332.44px;color:#000;letter-spacing:0.150px;">ProductName</span><span class="t" style="left:167.79px;top:332.44px;color:#000;transform:scaleX(0.8064);">REG_SZ</span><span class="t" style="left:249.10px;top:332.44px;color:#000;transform:scaleX(0.9648);">Windows 8.1 Pro</span><svg style="position:absolute;left:5px;top:349px" width="17" height="17" viewBox="0 0 17 17">
<path d="M0.5 0.5 H12.3 L15.5 3.2 V15.5 H13.5 L11.8 13.6 H9 L7.9 14.5 H5.2 L3.3 12.4 H0.5 Z" fill="#fff" stroke="#8c8c8c" stroke-width="1"/>
<path d="M12.3 0.5 V3.2 H15.5" fill="none" stroke="#b0b0b0" stroke-width="0.8"/>
<g fill="none" stroke="#e23a1a" stroke-width="1.5">
<path d="M8.0 3.2 V9.9"/>
<ellipse cx="10.2" cy="7.5" rx="1.45" ry="1.55"/>
<path d="M2.6 5.75 H4.9 Q6.05 5.75 6.05 6.9 V9.8"/>
<ellipse cx="4.05" cy="8.2" rx="1.15" ry="0.95" stroke-width="1.35"/>
</g>
</svg><span class="t" style="left:22.52px;top:351.44px;color:#000;transform:scaleX(0.9776);">RegisteredOrganization</span><span class="t" style="left:167.79px;top:351.44px;color:#000;transform:scaleX(0.8064);">REG_SZ</span><svg style="position:absolute;left:5px;top:368px" width="17" height="17" viewBox="0 0 17 17">
<path d="M0.5 0.5 H12.3 L15.5 3.2 V15.5 H13.5 L11.8 13.6 H9 L7.9 14.5 H5.2 L3.3 12.4 H0.5 Z" fill="#fff" stroke="#8c8c8c" stroke-width="1"/>
<path d="M12.3 0.5 V3.2 H15.5" fill="none" stroke="#b0b0b0" stroke-width="0.8"/>
<g fill="none" stroke="#e23a1a" stroke-width="1.5">
<path d="M8.0 3.2 V9.9"/>
<ellipse cx="10.2" cy="7.5" rx="1.45" ry="1.55"/>
<path d="M2.6 5.75 H4.9 Q6.05 5.75 6.05 6.9 V9.8"/>
<ellipse cx="4.05" cy="8.2" rx="1.15" ry="0.95" stroke-width="1.35"/>
</g>
</svg><span class="t" style="left:22.54px;top:370.44px;color:#000;transform:scaleX(0.9570);">RegisteredOwner</span><span class="t" style="left:167.79px;top:370.44px;color:#000;transform:scaleX(0.8064);">REG_SZ</span><span class="t" style="left:249.10px;top:370.44px;color:#000;transform:scaleX(0.8737);">axv</span><svg style="position:absolute;left:5px;top:387px" width="17" height="17" viewBox="0 0 17 17">
<path d="M0.5 0.5 H12.3 L15.5 3.2 V15.5 H13.5 L11.8 13.6 H9 L7.9 14.5 H5.2 L3.3 12.4 H0.5 Z" fill="#fff" stroke="#8c8c8c" stroke-width="1"/>
<path d="M12.3 0.5 V3.2 H15.5" fill="none" stroke="#b0b0b0" stroke-width="0.8"/>
<g fill="none" stroke="#e23a1a" stroke-width="1.5">
<path d="M8.0 3.2 V9.9"/>
<ellipse cx="10.2" cy="7.5" rx="1.45" ry="1.55"/>
<path d="M2.6 5.75 H4.9 Q6.05 5.75 6.05 6.9 V9.8"/>
<ellipse cx="4.05" cy="8.2" rx="1.15" ry="0.95" stroke-width="1.35"/>
</g>
</svg><span class="t" style="left:22.52px;top:389.44px;color:#000;transform:scaleX(0.9778);">SoftwareType</span><span class="t" style="left:167.79px;top:389.44px;color:#000;transform:scaleX(0.8064);">REG_SZ</span><span class="t" style="left:248.14px;top:389.44px;color:#000;transform:scaleX(0.9615);">System</span><svg style="position:absolute;left:5px;top:406px" width="17" height="17" viewBox="0 0 17 17">
<path d="M0.5 0.5 H12.3 L15.5 3.2 V15.5 H13.5 L11.8 13.6 H9 L7.9 14.5 H5.2 L3.3 12.4 H0.5 Z" fill="#fff" stroke="#8c8c8c" stroke-width="1"/>
<path d="M12.3 0.5 V3.2 H15.5" fill="none" stroke="#b0b0b0" stroke-width="0.8"/>
<g fill="none" stroke="#e23a1a" stroke-width="1.5">
<path d="M8.0 3.2 V9.9"/>
<ellipse cx="10.2" cy="7.5" rx="1.45" ry="1.55"/>
<path d="M2.6 5.75 H4.9 Q6.05 5.75 6.05 6.9 V9.8"/>
<ellipse cx="4.05" cy="8.2" rx="1.15" ry="0.95" stroke-width="1.35"/>
</g>
</svg><span class="t" style="left:22.54px;top:408.44px;color:#000;transform:scaleX(0.9569);">SystemRoot</span><span class="t" style="left:167.79px;top:408.44px;color:#000;transform:scaleX(0.8064);">REG_SZ</span><span class="t" style="left:249.10px;top:408.44px;color:#000;letter-spacing:0.078px;">C:\Windows</span></div><div class="r" style="left:422px;top:512px;width:512px;height:16px;background:#f0f0f0;"></div><div class="r" style="left:439px;top:512px;width:264px;height:16px;background:#cdcdcd;"></div><svg style="position:absolute;left:426px;top:515px" width="8" height="10" viewBox="0 0 8 10"><path d="M6.5 1 L2.5 5 L6.5 9" fill="none" stroke="#404040" stroke-width="2"/></svg><svg style="position:absolute;left:922px;top:515px" width="8" height="10" viewBox="0 0 8 10"><path d="M1.5 1 L5.5 5 L1.5 9" fill="none" stroke="#404040" stroke-width="2"/></svg><div class="r" style="left:0px;top:0px;width:937px;height:1px;background:#022c4e;"></div><div class="r" style="left:0px;top:0px;width:1px;height:530px;background:#0b3f60;"></div><div class="r" style="left:936px;top:0px;width:1px;height:530px;background:#063c5e;"></div><div class="r" style="left:1px;top:71px;width:1px;height:459px;background:#555a60;"></div><div class="r" style="left:935px;top:51px;width:1px;height:479px;background:#50555a;"></div><div class="r" style="left:1px;top:529px;width:935px;height:1px;background:#44484c;"></div>
</body></html>
